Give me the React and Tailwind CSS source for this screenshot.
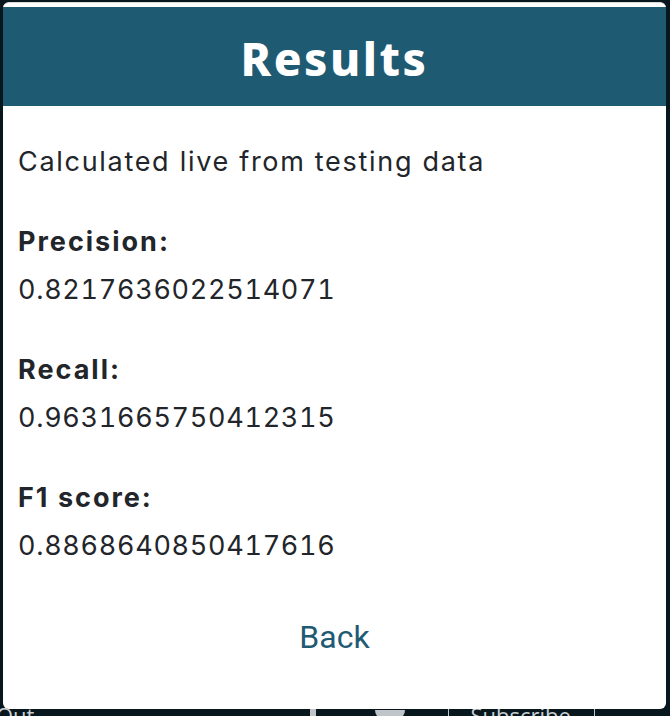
export default function App() {
  return (
    <div className="relative w-[670px] h-[716px] overflow-hidden bg-[#08171e]">
      {/* background page footer, partly hidden behind the modal */}
      <div className="absolute left-0 top-[704px] w-full h-[30px] flex items-start text-[#c9cfd2] text-[22px] leading-none" style={{ fontFamily: '"Open Sans", sans-serif' }}>
        <span className="ml-[-4px]">Out</span>
        <span className="ml-[276px] mt-[4px] w-[6px] h-[12px] bg-[#bfc5c8]"></span>
        <span className="ml-[59px] mt-[6px] w-[30px] h-[10px] rounded-b-full bg-[#bfc5c8]"></span>
        <span className="ml-[43px] mt-[4px] w-[1px] h-[14px] bg-[#bfc5c8]"></span>
        <span className="ml-[21px]">Subscribe</span>
        <span className="ml-[23px] mt-[4px] w-[1px] h-[14px] bg-[#bfc5c8]"></span>
      </div>

      {/* modal */}
      <div className="absolute left-[3px] top-[2px] w-[663px] h-[707px] bg-white rounded-[6px] pt-[4px] flex flex-col border-t border-[#d8d8d8]">
        <div className="h-[99px] bg-[#1f5a73] flex items-center justify-center">
          <h1 className="text-white text-[46px] font-extrabold tracking-[2.5px] leading-none pt-[2px]" style={{ fontFamily: '"Noto Sans", sans-serif' }}>
            Results
          </h1>
        </div>
        <div className="px-[15px] pt-[32px] text-[#222529] text-[27px] leading-[48px] flex flex-col" style={{ fontFamily: 'Inter, "Noto Sans", sans-serif' }}>
          <p className="tracking-[1.7px]">Calculated live from testing data</p>
          <div className="mt-[32px] flex flex-col gap-[32px]">
            {[
              ['Precision:', '0.8217636022514071'],
              ['Recall:', '0.9631665750412315'],
              ['F1 score:', '0.8868640850417616'],
            ].map(([label, value]) => (
              <div key={label} className="flex flex-col">
                <p className="font-bold tracking-[2px]">{label}</p>
                <p className="tabular-nums tracking-[0.7px]">{value}</p>
              </div>
            ))}
          </div>
        </div>
        <div className="flex justify-center pt-[51px]">
          <span className="text-[#1f5a73] text-[32px] leading-none" style={{ fontFamily: 'Roboto, sans-serif' }}>Back</span>
        </div>
      </div>
    </div>
  );
}
